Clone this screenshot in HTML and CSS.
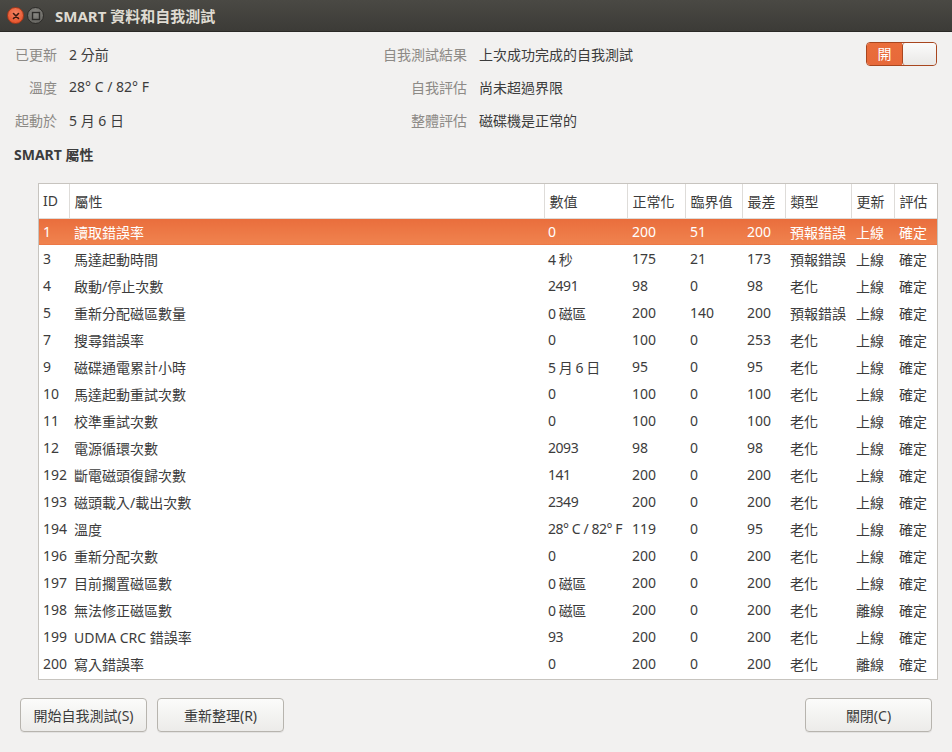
FILE: index.html
```html
<!DOCTYPE html>
<html lang="zh-Hant">
<head>
    <meta charset="UTF-8">
    <title>SMART 資料和自我測試</title>
    <link rel="stylesheet" href="styles.css">
</head>
<body>
    <div class="window">
        <div class="titlebar">
            <span class="win-btn close">
                <svg width="10" height="10" viewBox="0 0 10 10"><path d="M2.5 2.5 L7.5 7.5 M7.5 2.5 L2.5 7.5" stroke="#3a1a10" stroke-width="1.6" stroke-linecap="round"/></svg>
            </span>
            <span class="win-btn max">
                <svg width="10" height="10" viewBox="0 0 10 10"><rect x="1.5" y="1.5" width="7" height="7" fill="none" stroke="#2c2b28" stroke-width="1.4"/></svg>
            </span>
            <span class="title">SMART 資料和自我測試</span>
        </div>

        <div class="content">
            <!-- summary -->
            <div class="info">
                <span class="label">已更新</span>
                <span class="value">2 分前</span>
                <span class="label">自我測試結果</span>
                <span class="value">上次成功完成的自我測試</span>
                <div class="switch">
                    <span class="switch-on">開</span>
                    <span class="switch-knob"></span>
                </div>

                <span class="label">溫度</span>
                <span class="value">28° C / 82° F</span>
                <span class="label">自我評估</span>
                <span class="value">尚未超過界限</span>
                <span></span>

                <span class="label">起動於</span>
                <span class="value">5 月 6 日</span>
                <span class="label">整體評估</span>
                <span class="value">磁碟機是正常的</span>
                <span></span>
            </div>

            <h3 class="section-title">SMART 屬性</h3>

            <div class="table-frame">
                <table class="attr-table">
                    <colgroup>
                        <col class="c-id"><col class="c-name"><col class="c-value"><col class="c-norm">
                        <col class="c-thr"><col class="c-worst"><col class="c-type"><col class="c-upd"><col class="c-eval">
                    </colgroup>
                    <thead>
                        <tr>
                            <th>ID</th><th>屬性</th><th>數值</th><th>正常化</th><th>臨界值</th>
                            <th>最差</th><th>類型</th><th>更新</th><th>評估</th>
                        </tr>
                    </thead>
                    <tbody id="attr-body"></tbody>
                </table>
            </div>

            <div class="actions">
                <button class="btn">開始自我測試(S)</button>
                <button class="btn">重新整理(R)</button>
                <span class="spacer"></span>
                <button class="btn">關閉(C)</button>
            </div>
        </div>
    </div>

    <script>
        const attrs = [
            ["1", "讀取錯誤率", "0", "200", "51", "200", "預報錯誤", "上線", "確定"],
            ["3", "馬達起動時間", "4 秒", "175", "21", "173", "預報錯誤", "上線", "確定"],
            ["4", "啟動/停止次數", "2491", "98", "0", "98", "老化", "上線", "確定"],
            ["5", "重新分配磁區數量", "0 磁區", "200", "140", "200", "預報錯誤", "上線", "確定"],
            ["7", "搜尋錯誤率", "0", "100", "0", "253", "老化", "上線", "確定"],
            ["9", "磁碟通電累計小時", "5 月 6 日", "95", "0", "95", "老化", "上線", "確定"],
            ["10", "馬達起動重試次數", "0", "100", "0", "100", "老化", "上線", "確定"],
            ["11", "校準重試次數", "0", "100", "0", "100", "老化", "上線", "確定"],
            ["12", "電源循環次數", "2093", "98", "0", "98", "老化", "上線", "確定"],
            ["192", "斷電磁頭復歸次數", "141", "200", "0", "200", "老化", "上線", "確定"],
            ["193", "磁頭載入/載出次數", "2349", "200", "0", "200", "老化", "上線", "確定"],
            ["194", "溫度", "28° C / 82° F", "119", "0", "95", "老化", "上線", "確定"],
            ["196", "重新分配次數", "0", "200", "0", "200", "老化", "上線", "確定"],
            ["197", "目前擱置磁區數", "0 磁區", "200", "0", "200", "老化", "上線", "確定"],
            ["198", "無法修正磁區數", "0 磁區", "200", "0", "200", "老化", "離線", "確定"],
            ["199", "UDMA CRC 錯誤率", "93", "200", "0", "200", "老化", "上線", "確定"],
            ["200", "寫入錯誤率", "0", "200", "0", "200", "老化", "離線", "確定"]
        ];

        const body = document.getElementById("attr-body");
        attrs.forEach((row, index) => {
            const tr = document.createElement("tr");
            if (index === 0) tr.className = "selected";
            tr.innerHTML = row.map((cell, col) => `<td class="col-${col}">${cell}</td>`).join("");
            body.appendChild(tr);
        });
    </script>
</body>
</html>
```

FILE: styles.css
```css
* {
    box-sizing: border-box;
}

body {
    margin: 0;
    font-family: "Noto Sans", "Noto Sans CJK TC", sans-serif;
    font-size: 14px;
    color: #3c3c3c;
    background-color: #f2f1f0;
}

.window {
    width: 952px;
    height: 752px;
    display: flex;
    flex-direction: column;
}

.titlebar {
    height: 32px;
    display: flex;
    align-items: center;
    padding-left: 7px;
    background: linear-gradient(#4a4944, #3c3b37);
    border-bottom: 1px solid #2a2926;
}

.win-btn {
    width: 17px;
    height: 17px;
    border-radius: 50%;
    display: flex;
    align-items: center;
    justify-content: center;
    margin-right: 3px;
}

.win-btn.close {
    background: radial-gradient(circle at 50% 35%, #f48463, #e2481f);
    border: 1px solid #a8381a;
}

.win-btn.max {
    background: radial-gradient(circle at 50% 35%, #8a8984, #5e5d58);
    border: 1px solid #2d2c29;
}

.title {
    margin-left: 8px;
    font-weight: bold;
    font-size: 15px;
    color: #dfdbd2;
}

.content {
    flex: 1;
    display: flex;
    flex-direction: column;
    padding: 5px 15px 20px 14px;
}

.info {
    display: grid;
    grid-template-columns: 43px 288px 98px 1fr 71px;
    grid-auto-rows: 33px;
    column-gap: 12px;
    align-items: center;
}

.info .label {
    text-align: right;
    color: #8d8a86;
    white-space: nowrap;
}

.info .value {
    white-space: nowrap;
}

.switch {
    display: flex;
    width: 71px;
    height: 24px;
    border: 1px solid #a8461f;
    border-radius: 4px;
    overflow: hidden;
}

.switch-on {
    width: 35px;
    background: linear-gradient(#ea6d3b, #e7693a);
    color: #ffffff;
    text-align: center;
    line-height: 22px;
    font-size: 14px;
}

.switch-knob {
    flex: 1;
    background: linear-gradient(#fbfbfb, #e9e8e6);
    border-left: 1px solid #a8461f;
    border-radius: 3px;
}

.section-title {
    margin: 3px 0 0 0;
    height: 32px;
    line-height: 32px;
    font-size: 14px;
    font-weight: bold;
    color: #3c3c3c;
}

.table-frame {
    margin: 12px 0 0 24px;
    width: 900px;
    height: 497px;
    background-color: #ffffff;
    border: 1px solid #c7c4bf;
    overflow: hidden;
}

.attr-table {
    width: 898px;
    border-collapse: collapse;
    table-layout: fixed;
}

.c-id { width: 30px; }
.c-name { width: 475px; }
.c-value { width: 83px; }
.c-norm { width: 58px; }
.c-thr { width: 57px; }
.c-worst { width: 43px; }
.c-type { width: 66px; }
.c-upd { width: 43px; }
.c-eval { width: 43px; }

.attr-table th {
    height: 34px;
    padding: 0 0 0 5px;
    text-align: left;
    font-weight: normal;
    color: #3c3c3c;
    border-left: 1px solid #dedcd9;
    border-bottom: 1px solid #dedcd9;
    white-space: nowrap;
    overflow: hidden;
}

.attr-table th:first-child {
    border-left: none;
}

.attr-table td {
    height: 27px;
    padding: 0 0 0 5px;
    white-space: nowrap;
    overflow: hidden;
}

.attr-table th:first-child,
.attr-table td:first-child {
    padding-left: 4px;
}

.attr-table td.col-2 {
    padding-left: 4px;
    letter-spacing: -0.45px;
}

.attr-table tr.selected td {
    background: linear-gradient(#e96d3c, #f0834f);
    color: #ffffff;
}

.actions {
    display: flex;
    gap: 10px;
    margin-top: 18px;
    padding-left: 6px;
    padding-right: 5px;
}

.spacer {
    flex: 1;
}

.btn {
    width: 127px;
    height: 34px;
    font-family: inherit;
    font-size: 14px;
    color: #3c3c3c;
    background: linear-gradient(#fbfbfa, #ecebe9);
    border: 1px solid #b7b4ae;
    border-radius: 4px;
    box-shadow: 0 1px 0 rgba(0, 0, 0, 0.06);
}
```
